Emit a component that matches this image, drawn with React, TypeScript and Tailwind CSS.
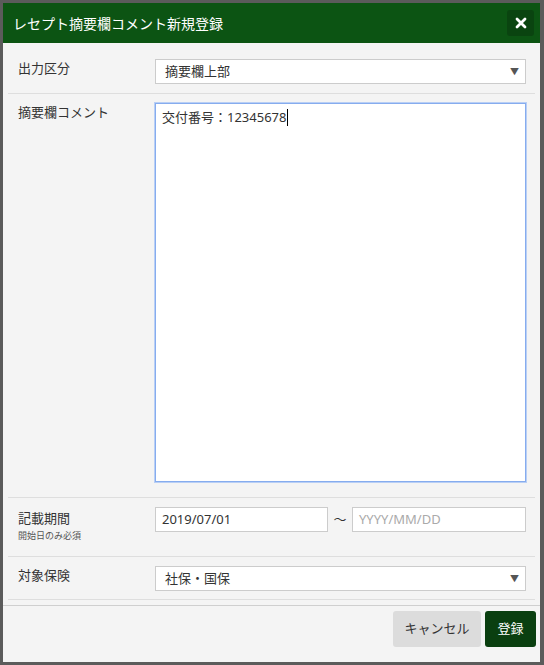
import React from "react";

const font = { fontFamily: '"Noto Sans", "Noto Sans CJK JP", sans-serif' };

function SelectBox({ value }: { value: string }) {
  return (
    <div className="relative h-[25px] w-[371px] border border-[#cccccc] bg-white flex items-center pl-[9px] text-[13px] text-[#333]">
      <span>{value}</span>
      <span className="absolute right-[6px] top-[7px] text-[9px] leading-none text-[#555]">▼</span>
    </div>
  );
}

export default function App() {
  return (
    <div className="w-[544px] h-[665px] bg-[#5b5b5b] pt-[3px] pl-[3px]" style={font}>
      <div className="w-[537px] h-[659px] bg-[#f4f4f4] flex flex-col">
        <div className="h-[40px] bg-[#0c5413] flex items-center justify-between pl-[10px] pr-[6px]">
          <span className="text-white text-[14px]">レセプト摘要欄コメント新規登録</span>
          <div className="w-[27px] h-[26px] rounded-[3px] bg-[#0a4410] flex items-center justify-center">
            <svg width="12" height="12" viewBox="0 0 12 12">
              <path d="M2 2 L10 10 M10 2 L2 10" stroke="white" strokeWidth="2.8" strokeLinecap="round" />
            </svg>
          </div>
        </div>
        <div className="px-[5px] flex flex-col">
          <div className="flex pt-[16px] pb-[9px] border-b border-[#dedede] pl-[10px]">
            <div className="w-[137px] text-[13px] text-[#333]">出力区分</div>
            <SelectBox value="摘要欄上部" />
          </div>
          <div className="flex pt-[9px] pb-[15px] border-b border-[#dedede] pl-[10px]">
            <div className="w-[137px] text-[13px] text-[#333]">摘要欄コメント</div>
            <div className="w-[371px] h-[379px] bg-white border border-[#86acee] shadow-[0_0_0_1px_#b9cff5] px-[6px] pt-[4px] text-[13px] text-[#333]">
              交付番号：12345678<span className="inline-block w-[1px] h-[17px] bg-black align-middle -mt-[2px]"></span>
            </div>
          </div>
          <div className="flex pt-[9px] pb-[13px] border-b border-[#dedede] pl-[10px]">
            <div className="w-[137px] text-[#333]">
              <div className="text-[13px] pt-[1px] leading-[20px]">記載期間</div>
              <div className="text-[9px] text-[#555] leading-[14px] mt-[1px]">開始日のみ必須</div>
            </div>
            <div className="flex items-start">
              <div className="w-[173px] h-[25px] border border-[#cccccc] bg-white flex items-center pl-[6px] text-[13px] text-[#333]">2019/07/01</div>
              <div className="w-[24px] text-center text-[13px] text-[#333] leading-[25px]">～</div>
              <div className="w-[174px] h-[25px] border border-[#cccccc] bg-white flex items-center pl-[6px] text-[13px] text-[#aaaaaa]">YYYY/MM/DD</div>
            </div>
          </div>
          <div className="flex pt-[9px] pb-[8px] border-b border-[#dedede] pl-[10px]">
            <div className="w-[137px] text-[13px] text-[#333]">対象保険</div>
            <SelectBox value="社保・国保" />
          </div>
        </div>
        <div className="mt-[5px] border-t border-[#cfcfcf] flex justify-end gap-[4px] pt-[5px] pr-[4px]">
          <div className="w-[88px] h-[36px] rounded-[3px] bg-[#dcdcdc] flex items-center justify-center text-[13px] text-[#333]">キャンセル</div>
          <div className="w-[51px] h-[36px] rounded-[3px] bg-[#0a3f10] flex items-center justify-center text-[13px] text-white">登録</div>
        </div>
      </div>
    </div>
  );
}
